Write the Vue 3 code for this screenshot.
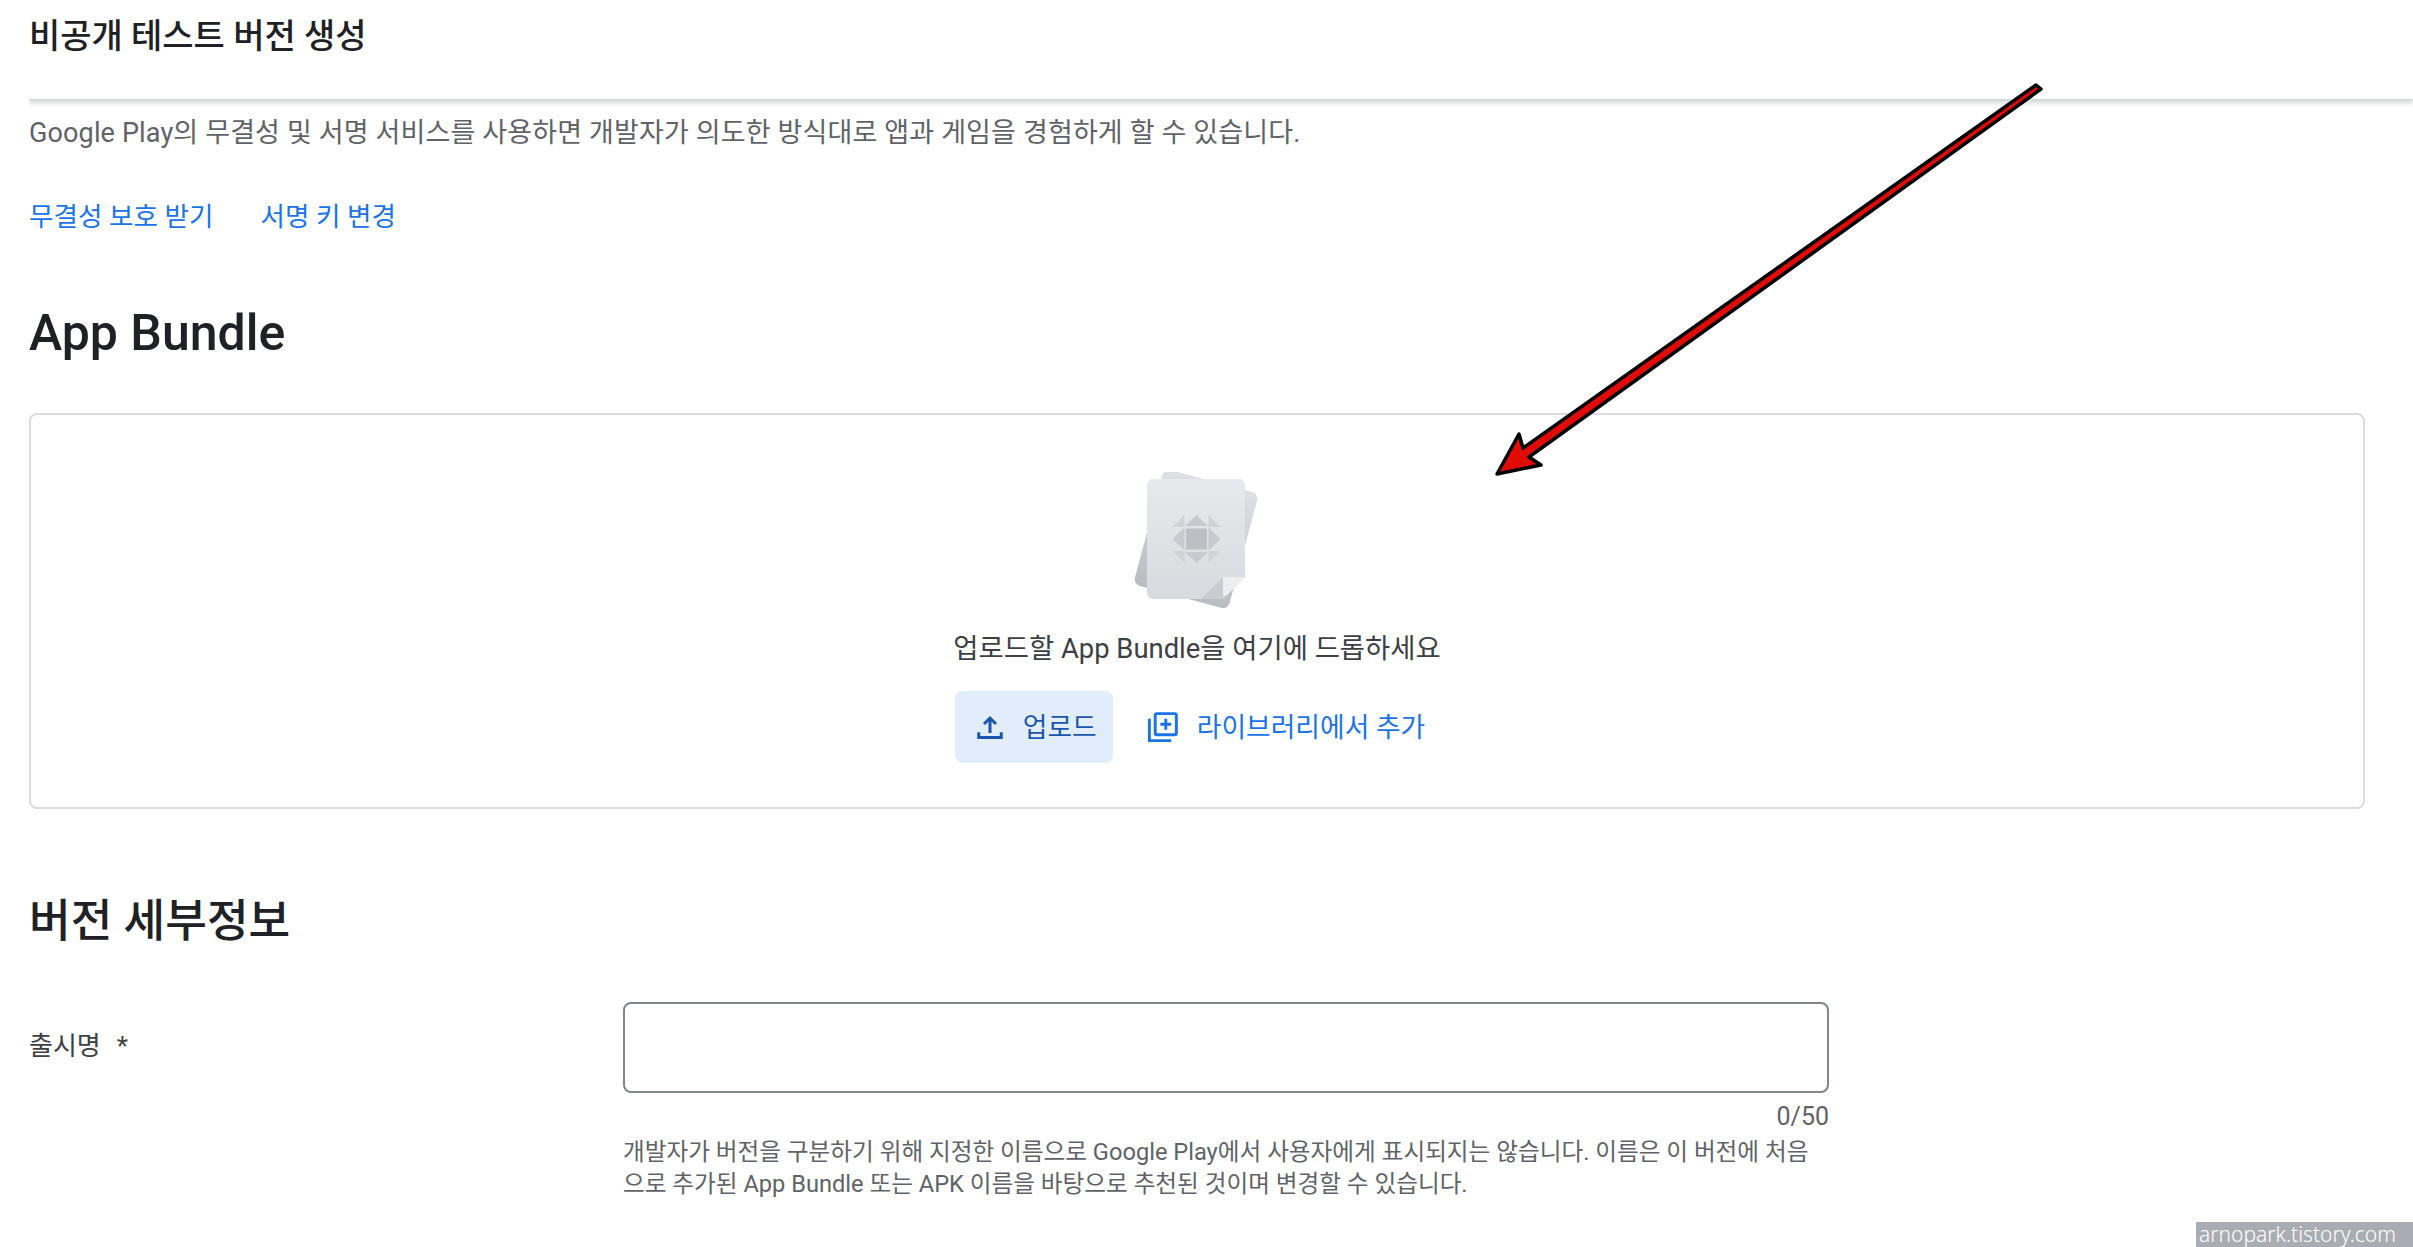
<template>
    <div class="page">
        <!-- Top bar -->
        <header class="topbar">
            <h1 class="topbar-title">비공개 테스트 버전 생성</h1>
        </header>

        <p class="intro">Google Play의 무결성 및 서명 서비스를 사용하면 개발자가 의도한 방식대로 앱과 게임을 경험하게 할 수 있습니다.</p>

        <div class="links">
            <a v-for="link in links" :key="link" class="link">{{ link }}</a>
        </div>

        <h2 class="section-title bundle-title">App Bundle</h2>

        <!-- Drop zone -->
        <section class="dropzone">
            <svg class="drop-art" width="146" height="140" viewBox="0 0 146 140">
                <defs>
                    <linearGradient id="backSheet" x1="0" y1="0" x2="0" y2="1">
                        <stop offset="0" stop-color="#dfe0e4" />
                        <stop offset="1" stop-color="#b9bcc1" />
                    </linearGradient>
                    <linearGradient id="frontSheet" x1="0" y1="0" x2="0" y2="1">
                        <stop offset="0" stop-color="#e8e9ed" />
                        <stop offset="1" stop-color="#d9dadf" />
                    </linearGradient>
                </defs>
                <rect x="24" y="7" width="98" height="120" rx="7" fill="url(#backSheet)" transform="rotate(15 73 67)" />
                <path d="M24 13 a6 6 0 0 1 6-6 h86 a6 6 0 0 1 6 6 v92 l-22 22 h-70 a6 6 0 0 1 -6-6 z" fill="url(#frontSheet)" />
                <path d="M78 127 l22-22 v22 z" fill="#caccd1" />
                <path d="M100 105 h22 l-18 18 q-4 3 -4-3 z" fill="#eeeef2" />
                <g transform="translate(73.500 67)">
                    <g fill="#d0d2d6">
                        <path d="M-24-12 l12-12 v12 z" />
                        <path d="M24-12 l-12-12 v12 z" />
                        <path d="M-24 12 l12 12 v-12 z" />
                        <path d="M24 12 l-12 12 v-12 z" />
                    </g>
                    <g fill="#c8cacf">
                        <path d="M0-24 l11.500 11 h-23 z" />
                        <path d="M0 24 l11.500-11 h-23 z" />
                        <path d="M-24 0 l12-11.500 v23 z" />
                        <path d="M24 0 l-12-11.500 v23 z" />
                    </g>
                    <rect x="-10.500" y="-10.500" width="21" height="21" fill="#bdbfc4" />
                </g>
            </svg>
            <p class="drop-text">업로드할 App Bundle을 여기에 드롭하세요</p>
            <div class="drop-actions">
                <button class="btn btn-tonal">
                    <svg width="36" height="36" viewBox="0 0 24 24" fill="none" stroke="#1a56ae" stroke-width="2">
                        <path d="M12 16V6.500M8 10l4-4 4 4M4.500 15.500V19h15v-3.500" />
                    </svg>
                    <span class="btn-label">업로드</span>
                </button>
                <button class="btn btn-text">
                    <svg width="35" height="35" viewBox="0 0 24 24" fill="none" stroke="#1a73e8" stroke-width="2">
                        <path d="M3 6v15h15" />
                        <rect x="7" y="2.500" width="14.500" height="14.500" rx="1" />
                        <path d="M14.250 6v7.500M10.500 9.750h7.500" />
                    </svg>
                    <span class="btn-label">라이브러리에서 추가</span>
                </button>
            </div>
        </section>

        <h2 class="section-title details-title">버전 세부정보</h2>

        <!-- Release name -->
        <div class="form-row">
            <label class="form-label">출시명<span class="form-required">*</span></label>
            <div class="form-field">
                <input class="form-input" type="text" />
                <div class="form-counter">{{ releaseName.length }}/50</div>
                <p class="form-help">개발자가 버전을 구분하기 위해 지정한 이름으로 Google Play에서 사용자에게 표시되지는 않습니다. 이름은 이 버전에 처음<br />으로 추가된 App Bundle 또는 APK 이름을 바탕으로 추천된 것이며 변경할 수 있습니다.</p>
            </div>
        </div>

        <!-- Annotation arrow -->
        <svg class="annotation" width="2413" height="1247" viewBox="0 0 2413 1247">
            <polygon points="2036,85 2041,89 1529,457 1541,465 1497,474 1519,434 1523,448" fill="#e00b05" stroke="#000" stroke-width="3.500" stroke-linejoin="round" />
        </svg>

        <div class="watermark">arnopark.tistory.com</div>
    </div>
</template>

<script setup>
import { ref } from 'vue';

const links = ['무결성 보호 받기', '서명 키 변경'];
const releaseName = ref('');
</script>

<style>
html, body {
    margin: 0;
    background: #fff;
    overflow: hidden;
}
</style>

<style scoped>
.page {
    position: relative;
    width: 2413px;
    height: 1247px;
    overflow: hidden;
    background: #fff;
    font-family: Roboto, "Noto Sans CJK KR", sans-serif;
    color: #202124;
}

.topbar {
    height: 100px;
    margin-left: 29px;
    box-sizing: border-box;
    padding-top: 14px;
    border-bottom: 1px solid #d5d6d8;
    box-shadow: 0 3px 5px rgba(60, 64, 67, 0.22);
    clip-path: inset(0 0 -12px 0);
}

.topbar-title {
    margin: 0;
    font-size: 34px;
    line-height: 44px;
    font-weight: 500;
    letter-spacing: -0.05px;
}

.intro {
    margin: 15px 0 0 29px;
    font-size: 27px;
    line-height: 36px;
    color: #5f6368;
    letter-spacing: 0.14px;
}

.links {
    display: flex;
    gap: 47px;
    margin: 48px 0 0 29px;
}

.link {
    font-size: 26.600px;
    line-height: 36px;
    color: #1a73e8;
}

.section-title {
    margin: 0 0 0 29px;
    font-weight: 500;
    color: #202124;
}

.bundle-title {
    margin-top: 64px;
    font-size: 50px;
    line-height: 68px;
}

.dropzone {
    display: flex;
    flex-direction: column;
    align-items: center;
    box-sizing: border-box;
    width: 2336px;
    height: 396px;
    margin: 46px 0 0 29px;
    padding-top: 57px;
    border: 2px solid #dadce0;
    border-radius: 8px;
}

.drop-art {
    display: block;
    margin-left: -2px;
}

.drop-text {
    margin: 17px 0 0;
    font-size: 27.400px;
    line-height: 40px;
    color: #3c4043;
}

.drop-actions {
    display: flex;
    align-items: center;
    gap: 32px;
    margin-top: 22px;
    margin-left: -14px;
}

.btn {
    display: flex;
    align-items: center;
    padding: 0;
    border: none;
    background: none;
    font-family: inherit;
    font-size: 26.800px;
}

.btn-label {
    padding-bottom: 4px;
}

.btn-tonal {
    width: 158px;
    height: 72px;
    padding-left: 17px;
    box-sizing: border-box;
    gap: 15px;
    border-radius: 8px;
    background: #e2edfb;
    color: #1a56ae;
}

.btn-text {
    gap: 17px;
    color: #1a73e8;
}

.details-title {
    margin-top: 82px;
    font-size: 45.300px;
    line-height: 62px;
}

.form-row {
    display: flex;
    margin: 49px 0 0 29px;
}

.form-label {
    width: 594px;
    padding-top: 26px;
    font-size: 26px;
    line-height: 36px;
    color: #3c4043;
}

.form-required {
    margin-left: 16px;
}

.form-field {
    width: 1206px;
}

.form-input {
    display: block;
    box-sizing: border-box;
    width: 100%;
    height: 91px;
    border: 2px solid #80868b;
    border-radius: 8px;
    background: #fff;
}

.form-counter {
    margin-top: 10px;
    font-size: 25px;
    line-height: 28px;
    text-align: right;
    color: #5f6368;
}

.form-help {
    margin: 5px 0 0;
    font-size: 23.640px;
    line-height: 32px;
    white-space: nowrap;
    color: #5f6368;
}

.annotation {
    position: absolute;
    top: 0;
    left: 0;
    pointer-events: none;
}

.watermark {
    position: absolute;
    right: 0;
    bottom: 0;
    box-sizing: border-box;
    width: 217px;
    height: 25px;
    padding-left: 3px;
    background: #a9adb3;
    color: #fff;
    font-family: "Noto Sans", sans-serif;
    font-size: 21px;
    font-weight: 300;
    line-height: 25px;
    white-space: nowrap;
}
</style>
